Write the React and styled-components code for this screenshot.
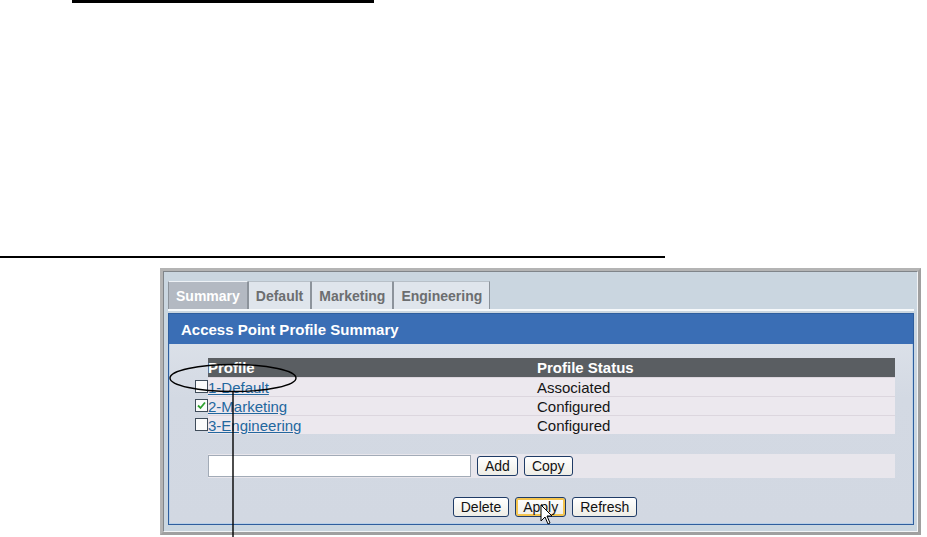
import React from "react"
import styled, { createGlobalStyle } from "styled-components"

const GlobalStyle = createGlobalStyle`
  html, body {
    margin: 0;
    padding: 0;
    background: #ffffff;
    font-family: "Liberation Sans", Arial, sans-serif;
  }
`

const Page = styled.div`
  position: relative;
  width: 927px;
  height: 537px;
  overflow: hidden;
  background: #ffffff;
`

const TopBar = styled.div`
  margin-left: 72px;
  width: 302px;
  height: 3px;
  background: #000000;
`

const Rule = styled.div`
  margin-top: 253px;
  width: 665px;
  height: 2px;
  background: #000000;
`

const Figure = styled.div`
  margin: 10px 0 0 160px;
  width: 761px;
  box-sizing: border-box;
  border: 3px solid #b4b4b4;
  border-right-color: #a0a0a0;
  border-bottom-color: #a0a0a0;
`

const Window = styled.div`
  border: 1px solid #80858a;
  border-right-color: #f2f4f6;
  border-bottom-color: #f2f4f6;
  background: #cad6e0;
  padding: 9px 3px 6px 4px;
`

const TabBar = styled.div`
  display: flex;
  border-bottom: 2px solid #f6f9fb;
  margin-bottom: 2px;
`

const Tab = styled.div`
  height: 28px;
  box-sizing: border-box;
  display: flex;
  align-items: center;
  padding: 0 7px;
  font-size: 14px;
  font-weight: bold;
  color: ${(p) => (p.active ? "#ffffff" : "#6c6e70")};
  background: ${(p) => (p.active ? "#b3b9c2" : "#dfe5ec")};
  border: 1px solid #8c939b;
  border-top-color: ${(p) => (p.active ? "#eef2f6" : "#b8c0c8")};
  border-bottom: none;
`

const Panel = styled.div`
  border: 1px solid #2e5e9e;
  background: linear-gradient(#dfe4eb, #d3d9e3 40%, #d2d8e2);
  box-shadow: inset 0 0 0 1px #b9cfe6;
`

const Header = styled.div`
  height: 30px;
  display: flex;
  align-items: center;
  padding-left: 12px;
  background: #3a6eb5;
  color: #ffffff;
  font-size: 15px;
  font-weight: bold;
`

const Body = styled.div`
  padding: 14px 18px 7px 26px;
`

const Row = styled.div`
  display: flex;
  align-items: center;
  height: 19px;
`

const CheckCell = styled.div`
  width: 13px;
  height: 100%;
  display: flex;
  align-items: center;
`

const Box = styled.div`
  width: 11px;
  height: 11px;
  border: 1px solid #3f4c5a;
  background: #fbfbfb;
  display: flex;
  align-items: center;
  justify-content: center;
`

const Cells = styled.div`
  flex: 1;
  height: 100%;
  display: flex;
  align-items: center;
  background: ${(p) => (p.head ? "#5a5e62" : "#ece8ee")};
  border-top: ${(p) => (p.head ? "none" : "1px solid #dcd6de")};
  box-sizing: border-box;
  color: ${(p) => (p.head ? "#ffffff" : "#151515")};
  font-size: 15px;
  font-weight: ${(p) => (p.head ? "bold" : "normal")};
`

const NameCell = styled.div`
  width: 329px;
`

const Link = styled.a`
  color: #23679e;
  text-decoration: underline;
`

const Strip = styled.div`
  margin: 20px 0 0 13px;
  height: 24px;
  display: flex;
  align-items: center;
  gap: 6px;
  background: #e8e6ec;
`

const Field = styled.div`
  width: 263px;
  height: 22px;
  box-sizing: border-box;
  background: #ffffff;
  border: 1px solid #a2abb7;
`

const Button = styled.button`
  height: 20px;
  box-sizing: border-box;
  padding: 0 7px;
  font-family: "Liberation Sans", Arial, sans-serif;
  font-size: 14px;
  line-height: 1;
  color: #111111;
  background: linear-gradient(#ffffff, #eeede6);
  border: 1px solid #1f3b66;
  border-radius: 3px;
  box-shadow: ${(p) => (p.hot ? "inset 0 0 0 2px #f4c44e" : "none")};
`

const Actions = styled.div`
  margin-top: 19px;
  display: flex;
  justify-content: center;
  gap: 6px;
`

const Overlay = styled.svg`
  position: absolute;
  left: 0;
  top: 0;
  pointer-events: none;
`

const profiles = [
  { name: "1-Default", status: "Associated", checked: false },
  { name: "2-Marketing", status: "Configured", checked: true },
  { name: "3-Engineering", status: "Configured", checked: false },
]

const tabs = ["Summary", "Default", "Marketing", "Engineering"]

export default function App() {
  return (
    <Page>
      <GlobalStyle />
      <TopBar />
      <Rule />
      <Figure>
        <Window>
          <TabBar>
            {tabs.map((t, i) => (
              <Tab key={t} active={i === 0}>
                {t}
              </Tab>
            ))}
          </TabBar>
          <Panel>
            <Header>Access Point Profile Summary</Header>
            <Body>
              <Row>
                <CheckCell />
                <Cells head>
                  <NameCell>Profile</NameCell>
                  <div>Profile Status</div>
                </Cells>
              </Row>
              {profiles.map((p) => (
                <Row key={p.name}>
                  <CheckCell>
                    <Box>
                      {p.checked && (
                        <svg width="9" height="9" viewBox="0 0 9 9">
                          <path
                            d="M1 4.5 L3.5 7 L8 1.5"
                            fill="none"
                            stroke="#2ea02e"
                            strokeWidth="1.8"
                          />
                        </svg>
                      )}
                    </Box>
                  </CheckCell>
                  <Cells>
                    <NameCell>
                      <Link>{p.name}</Link>
                    </NameCell>
                    <div>{p.status}</div>
                  </Cells>
                </Row>
              ))}
              <Strip>
                <Field />
                <Button>Add</Button>
                <Button>Copy</Button>
              </Strip>
              <Actions>
                <Button>Delete</Button>
                <Button hot>Apply</Button>
                <Button>Refresh</Button>
              </Actions>
            </Body>
          </Panel>
        </Window>
      </Figure>
      <Overlay width="927" height="537">
        <ellipse cx="233" cy="378" rx="63" ry="13.5" fill="none" stroke="#000" strokeWidth="1.4" />
        <line x1="233" y1="391.5" x2="233" y2="537" stroke="#000" strokeWidth="1.4" />
        <path
          d="M541 505 L541 521 L545 517 L548 524 L550 523 L547 516 L552 516 Z"
          fill="#ffffff"
          stroke="#000000"
          strokeWidth="1"
        />
      </Overlay>
    </Page>
  )
}
